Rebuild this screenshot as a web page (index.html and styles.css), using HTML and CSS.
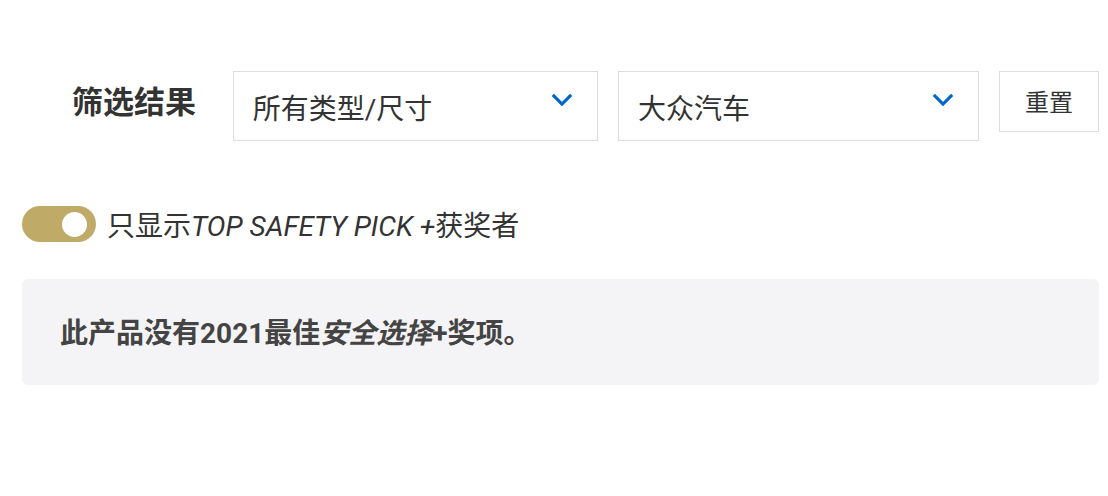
FILE: index.html
```html
<!DOCTYPE html>
<html lang="zh-CN">
<head>
  <meta charset="UTF-8" />
  <title>筛选结果</title>
  <meta name="viewport" content="width=device-width, initial-scale=1" />
  <link rel="stylesheet" href="styles.css">
</head>
<body>
  <div class="pagina">
    <div class="filtros">
      <span class="filtros-titulo">筛选结果</span>
      <div class="seletor seletor-tipo">
        <span>所有类型/尺寸</span>
        <svg class="seta" viewBox="0 0 24 14"><path d="M2 2l10 10 10-10" /></svg>
      </div>
      <div class="seletor seletor-marca">
        <span>大众汽车</span>
        <svg class="seta" viewBox="0 0 24 14"><path d="M2 2l10 10 10-10" /></svg>
      </div>
      <button class="reset">重置</button>
    </div>

    <label class="chave">
      <span class="chave-trilho"><span class="chave-botao"></span></span>
      <span>只显示<em>TOP SAFETY PICK +</em>获奖者</span>
    </label>

    <div class="aviso">此产品没有2021最佳<em>安全选择</em>+奖项。</div>
  </div>
</body>
</html>
```

FILE: styles.css
```css
body {
  margin: 0;
  font-family: Roboto, "Noto Sans CJK SC", sans-serif;
  color: #333;
  background: #fff;
}
.pagina {
  padding: 71px 9px 0 22px;
}
.filtros {
  display: flex;
  align-items: flex-start;
  padding-left: 51px;
}
.filtros-titulo {
  font-size: 31px;
  font-weight: bold;
  line-height: 70px;
  width: 161px;
  margin-top: -3px;
  margin-left: -1px;
  color: #333;
}
.seletor {
  box-sizing: border-box;
  height: 70px;
  border: 1px solid #ddd;
  display: flex;
  align-items: center;
  justify-content: space-between;
  padding: 0 24px 0 19px;
  font-size: 28px;
  color: #333;
  margin-right: 20px;
}
.seletor span {
  margin-top: 1px;
}
.seletor-tipo {
  width: 366px;
}
.seletor-marca {
  width: 362px;
}
.seta {
  width: 22px;
  height: 13px;
  margin-top: -14px;
  fill: none;
  stroke: #0066cc;
  stroke-width: 3.4;
}
.reset {
  box-sizing: border-box;
  width: 100px;
  height: 61px;
  background: #fff;
  border: 1px solid #ddd;
  font-family: Roboto, "Noto Sans CJK SC", sans-serif;
  font-size: 24px;
  color: #333;
  padding: 0 0 3px;
}
.chave {
  display: flex;
  align-items: center;
  gap: 11px;
  margin-top: 63px;
  font-size: 28px;
  color: #333;
}
.chave em {
  font-style: italic;
}
.chave-trilho {
  width: 74px;
  height: 36px;
  border-radius: 18px;
  background: #bfab67;
  display: flex;
  align-items: center;
  justify-content: flex-end;
  padding-right: 9px;
  box-sizing: border-box;
}
.chave-botao {
  width: 25px;
  height: 25px;
  border-radius: 50%;
  background: #fff;
}
.aviso {
  margin-top: 35px;
  background: #f4f4f6;
  border-radius: 6px;
  height: 106px;
  box-sizing: border-box;
  padding: 0 38px 3px;
  display: flex;
  align-items: center;
  font-size: 28px;
  font-weight: bold;
  color: #444;
}
.aviso em {
  font-style: italic;
}
```
